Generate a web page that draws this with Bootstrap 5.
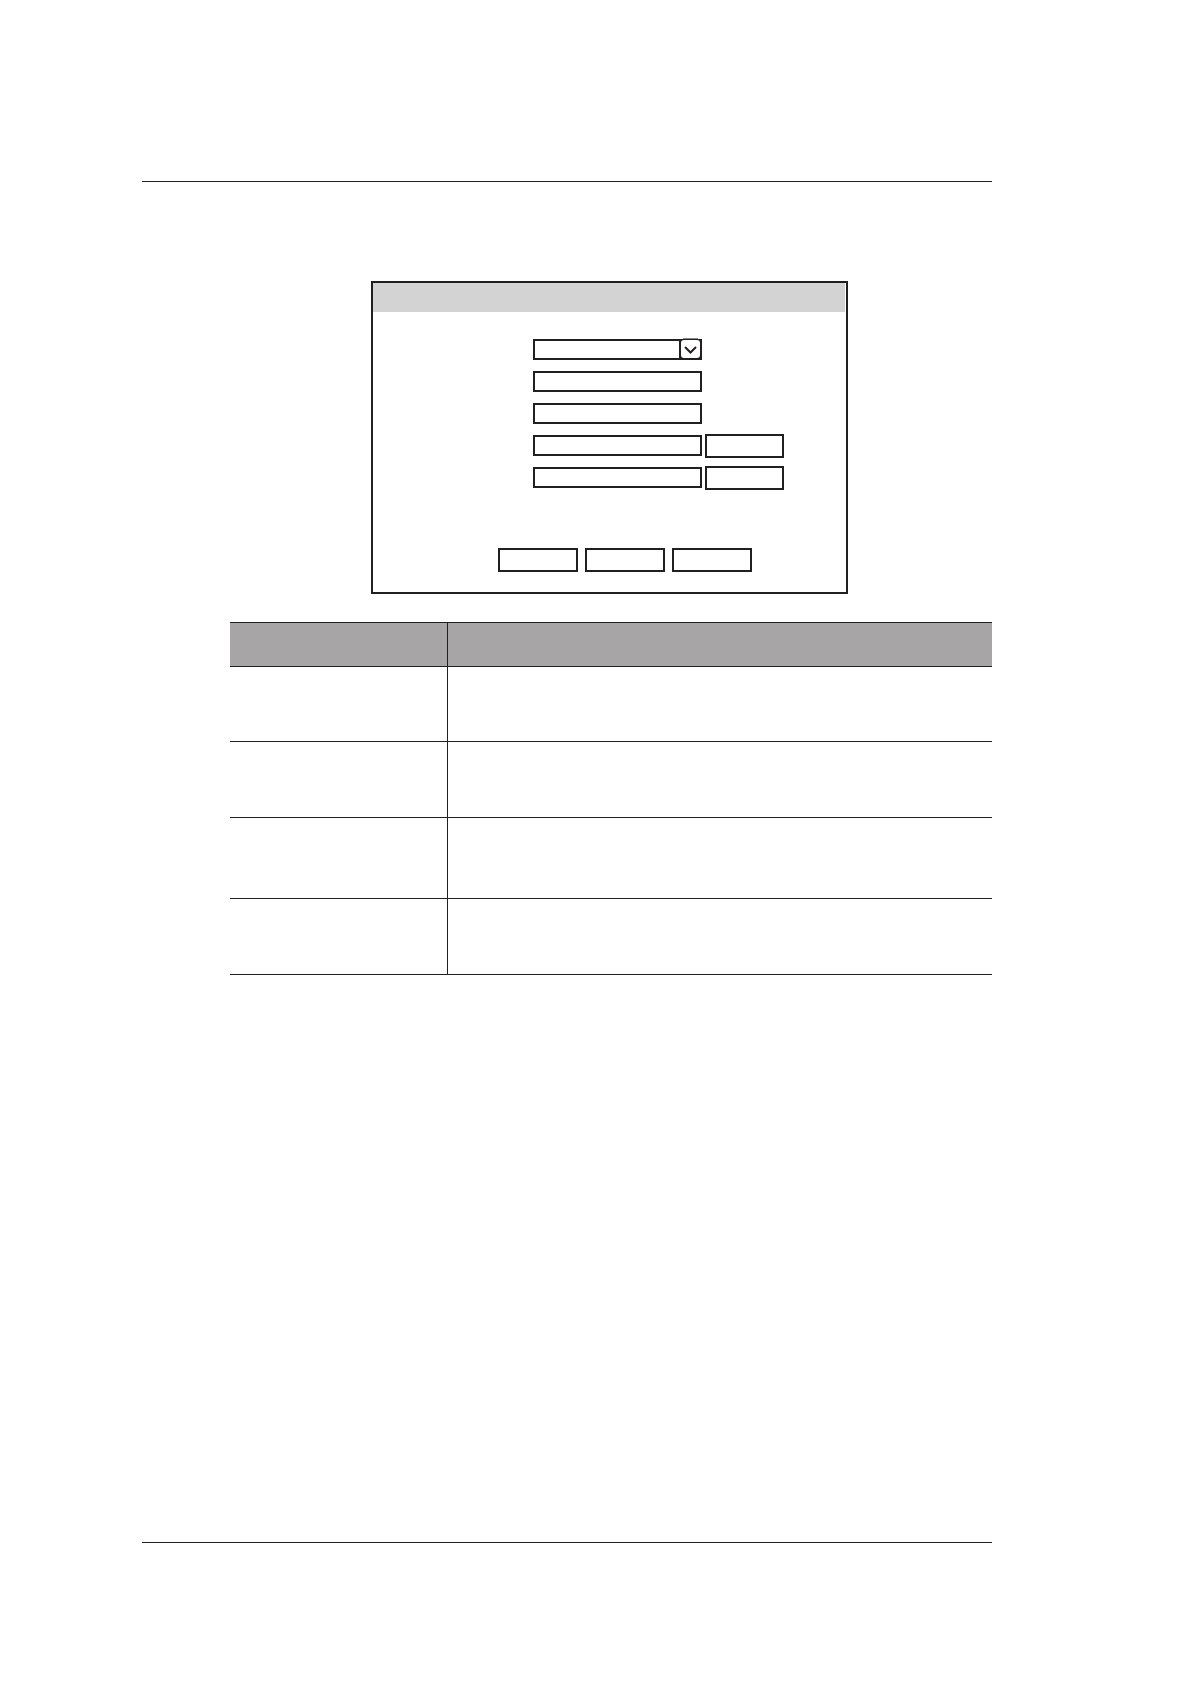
<!DOCTYPE html>
<html lang="en">
<head>
<meta charset="utf-8">
<meta name="viewport" content="width=device-width, initial-scale=1">
<title>Settings</title>
<link href="https://cdn.jsdelivr.net/npm/bootstrap@5.3.0/dist/css/bootstrap.min.css" rel="stylesheet">
<style>
  :root { --ink: #221f20; }
  body { font-family: "Liberation Sans", Arial, sans-serif; background: #fff; color: var(--ink); }
  .sheet { padding: 181px 199px 141px 142px; }
  .sheet-rule { border: 0; border-top: 1px solid var(--ink); opacity: 1; }
  .sheet-body { margin: 99px 0 0 88px; }

  .dialog-box { max-width: 477px; margin-left: 141px; border: 2px solid var(--ink); }
  .dialog-title { height: 29px; margin-right: 1px; background: #d3d3d3; }
  .dialog-fields { padding: 26px 0 0 160px; gap: 8px; }
  .field-line { height: 24px; gap: 3px; }
  .field-slot { width: 169px; padding-top: 1px; }
  .field-box { display: block; width: 100%; height: 21px; padding: 0 4px; font-size: 12px;
    border: 2px solid var(--ink); border-radius: 0; background: #fff; appearance: none; }
  .drop-arrow { top: 0; right: 0; pointer-events: none; }
  .plain-btn { width: 80px; height: 24px; padding: 0; border: 2px solid var(--ink); border-radius: 0; background: #fff; }
  .field-line .plain-btn { width: 79px; }
  .dialog-actions { padding: 58px 0 20px 125px; gap: 7px; }

  .spec-table { margin-top: 28px; border-collapse: separate; border-spacing: 0; table-layout: fixed; border-top: 1px solid var(--ink); }
  .spec-table th, .spec-table td { padding: 0; height: 76px; border: 0; border-bottom: 1px solid var(--ink); background: #fff; }
  .spec-table tr > :first-child { width: 218px; border-right: 1px solid var(--ink); }
  .spec-table thead th { height: 44px; background: #a7a5a6; }
  .spec-table .row-short > * { height: 75px; }
  .spec-table .row-tall > * { height: 81px; }
</style>
</head>
<body>
<div class="sheet d-flex flex-column min-vh-100">
  <hr class="sheet-rule m-0">
  <main class="sheet-body">
    <form class="dialog-box">
      <div class="dialog-title"></div>
      <div class="dialog-fields d-flex flex-column">
        <div class="field-line d-flex">
          <div class="field-slot position-relative">
            <select class="field-box" aria-label="Type"><option></option></select>
            <svg class="drop-arrow position-absolute" width="23" height="22" viewBox="0 0 23 22" aria-hidden="true">
              <path d="M4 .5h15" stroke="#8a8889"/>
              <path d="M0 1h23v21H0z" fill="#221f20"/>
              <rect x="2" y="2" width="19" height="18" rx="3" fill="#fff"/>
              <path d="M6 9l5.500 5.500L17 9" fill="none" stroke="#221f20" stroke-width="2"/>
            </svg>
          </div>
        </div>
        <div class="field-line d-flex">
          <div class="field-slot"><input class="field-box" type="text" aria-label="Field 2"></div>
        </div>
        <div class="field-line d-flex">
          <div class="field-slot"><input class="field-box" type="text" aria-label="Field 3"></div>
        </div>
        <div class="field-line d-flex">
          <div class="field-slot"><input class="field-box" type="text" aria-label="Field 4"></div>
          <button class="plain-btn" type="button" aria-label="Set field 4"></button>
        </div>
        <div class="field-line d-flex">
          <div class="field-slot"><input class="field-box" type="text" aria-label="Field 5"></div>
          <button class="plain-btn" type="button" aria-label="Set field 5"></button>
        </div>
      </div>
      <div class="dialog-actions d-flex">
        <button class="plain-btn" type="button" aria-label="Default"></button>
        <button class="plain-btn" type="button" aria-label="Save"></button>
        <button class="plain-btn" type="button" aria-label="Cancel"></button>
      </div>
    </form>

    <table class="spec-table table mb-0">
      <thead><tr><th scope="col"></th><th scope="col"></th></tr></thead>
      <tbody>
        <tr class="row-short"><td></td><td></td></tr>
        <tr><td></td><td></td></tr>
        <tr class="row-tall"><td></td><td></td></tr>
        <tr><td></td><td></td></tr>
      </tbody>
    </table>
  </main>
  <hr class="sheet-rule m-0 mt-auto">
</div>
<script src="https://cdn.jsdelivr.net/npm/bootstrap@5.3.0/dist/js/bootstrap.bundle.min.js"></script>
</body>
</html>
